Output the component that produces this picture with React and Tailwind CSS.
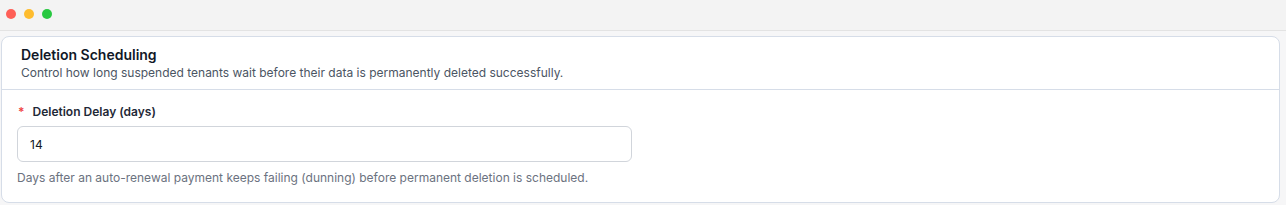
import React from "react";

const App = () => {
  return (
    <div className="min-h-[205px] bg-[#f6f6f7] font-['Inter',sans-serif]">
      {/* Window chrome */}
      <div className="h-[31px] flex items-center gap-[8px] px-[6px] pb-[2px] bg-[#f3f3f3] border-b border-[#e3e3e3]">
        <span className="w-[10px] h-[10px] rounded-full bg-[#fe5f57]" />
        <span className="w-[10px] h-[10px] rounded-full bg-[#febc2e]" />
        <span className="w-[10px] h-[10px] rounded-full bg-[#28c840]" />
      </div>

      {/* Card */}
      <div className="ml-[1px] mr-[6px] mt-[5px] bg-white border border-[#d6dde8] rounded-lg">
        <div className="px-[19px] pt-[8px] pb-[8px] border-b border-[#d6dde8]">
          <h3 className="text-sm leading-5 font-semibold text-[#111827]">Deletion Scheduling</h3>
          <p className="text-xs leading-4 text-[#4b5563]">
            Control how long suspended tenants wait before their data is permanently deleted successfully.
          </p>
        </div>

        <div className="px-[15px] pt-[14px] pb-[16px]">
          <label className="flex items-center text-xs leading-4 font-semibold text-[#1f2937]">
            <span className="text-[#ef4444] mr-[8px] pl-[1px]">*</span>
            Deletion Delay (days)
          </label>
          <input
            type="text"
            defaultValue="14"
            className="mt-[6px] block w-[615px] h-[36px] px-[12px] text-xs text-[#111827] border border-[#d1d5db] rounded-md outline-none"
          />
          <p className="mt-[8px] text-xs leading-4 text-[#6b7280]">
            Days after an auto-renewal payment keeps failing (dunning) before permanent deletion is scheduled.
          </p>
        </div>
      </div>
    </div>
  );
};

export default App;
